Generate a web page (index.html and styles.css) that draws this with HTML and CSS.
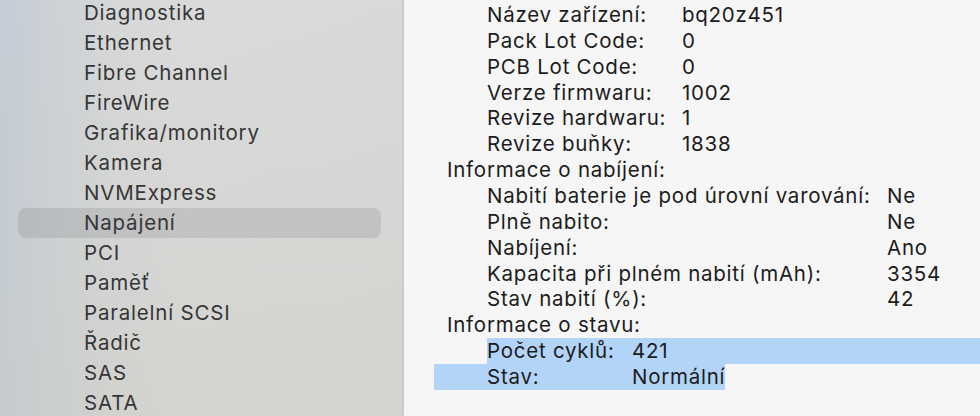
FILE: index.html
```
<!DOCTYPE html>
<html>
<head>
    <title>Informace o systému</title>
    <link rel="stylesheet" href="styles.css">
</head>
<body>
    <div class="window">
        <div class="sidebar">
            <ul class="nav">
                <li>Diagnostika</li>
                <li>Ethernet</li>
                <li>Fibre Channel</li>
                <li>FireWire</li>
                <li>Grafika/monitory</li>
                <li>Kamera</li>
                <li>NVMExpress</li>
                <li class="active">Napájení</li>
                <li>PCI</li>
                <li>Paměť</li>
                <li>Paralelní SCSI</li>
                <li>Řadič</li>
                <li>SAS</li>
                <li>SATA</li>
            </ul>
        </div>
        <div class="content">
            <div class="rows model">
                <span>Název zařízení:</span><span>bq20z451</span>
                <span>Pack Lot Code:</span><span>0</span>
                <span>PCB Lot Code:</span><span>0</span>
                <span>Verze firmwaru:</span><span>1002</span>
                <span>Revize hardwaru:</span><span>1</span>
                <span>Revize buňky:</span><span>1838</span>
            </div>
            <div class="heading">Informace o nabíjení:</div>
            <div class="rows charge">
                <span>Nabití baterie je pod úrovní varování:</span><span>Ne</span>
                <span>Plně nabito:</span><span>Ne</span>
                <span>Nabíjení:</span><span>Ano</span>
                <span>Kapacita při plném nabití (mAh):</span><span>3354</span>
                <span>Stav nabití (%):</span><span>42</span>
            </div>
            <div class="heading">Informace o stavu:</div>
            <div class="rows health selected first">
                <span>Počet cyklů:</span><span>421</span>
            </div>
            <div class="rows health selected last">
                <span>Stav:</span><span>Normální</span>
            </div>
        </div>
    </div>
</body>
</html>
```
FILE: styles.css
```
body {
    margin: 0;
    width: 980px;
    height: 416px;
    overflow: hidden;
    font-family: Inter, "Noto Sans", sans-serif;
    -webkit-font-smoothing: antialiased;
}

.window {
    display: flex;
    height: 416px;
}

/* --- Postranní panel --- */
.sidebar {
    width: 402px;
    flex-shrink: 0;
    border-right: 2px solid #cbcbcb;
    background:
        linear-gradient(180deg, rgba(200, 208, 216, 0) 0%, rgba(200, 202, 190, 0.35) 100%),
        linear-gradient(90deg, #c4ccd6 0%, #ccd1d6 12%, #d6d7d8 28%, #dadada 45%, #d9d9d9 100%);
}

.nav {
    list-style: none;
    margin: -2px 0 0 0;
    padding: 0 21px 0 18px;
}

.nav li {
    height: 30px;
    line-height: 30px;
    padding-left: 66px;
    font-size: 20.5px;
    letter-spacing: 0.8px;
    color: #363636;
    border-radius: 8px;
}

.nav li.active {
    background-color: rgba(60, 60, 70, 0.13);
}

/* --- Obsah --- */
.content {
    flex: 1;
    background-color: #f6f6f6;
    padding-top: 2px;
    font-size: 20.5px;
    letter-spacing: 0.75px;
    line-height: 25.86px;
    color: #1c1c1c;
}

.heading {
    padding-left: 43px;
}

.rows {
    display: grid;
    margin-left: 83px;
}

.model {
    grid-template-columns: 195px auto;
}

.charge {
    grid-template-columns: 400px auto;
}

.health {
    grid-template-columns: 145px auto;
}

.selected {
    background-color: #b2d4f8;
}

.selected.last {
    margin-left: 30px;
    padding-left: 53px;
    width: fit-content;
    grid-template-columns: 145px max-content;
}
```
